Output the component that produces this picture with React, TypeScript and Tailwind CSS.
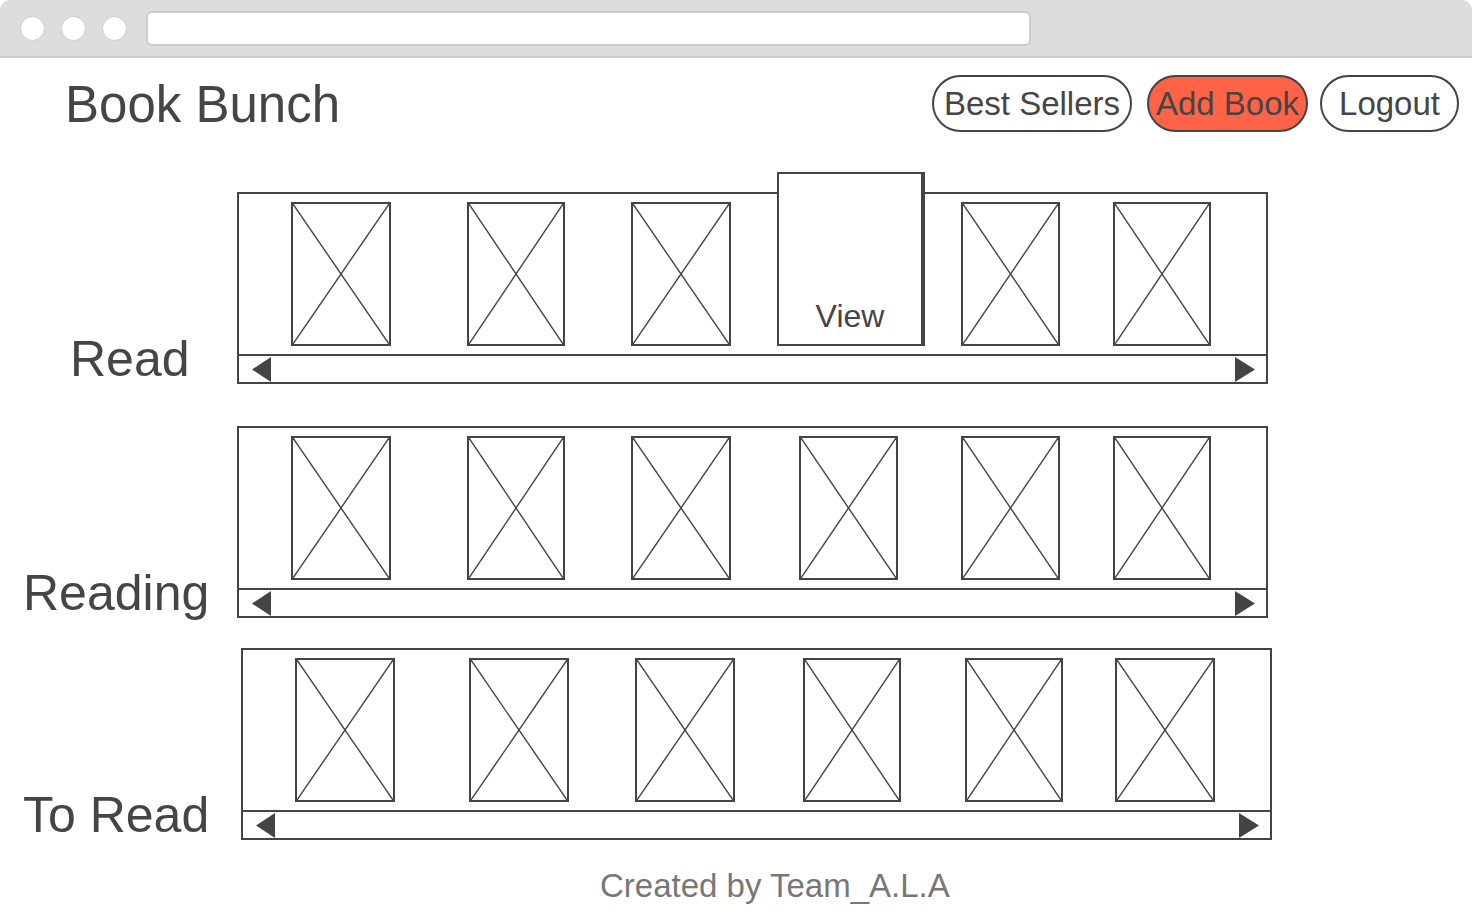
import type { ReactNode } from 'react';

type Item = { ml: string; w: string; view?: boolean };

const readRow: Item[] = [
  { ml: 'ml-[52px]', w: 'w-[100px]' },
  { ml: 'ml-[76px]', w: 'w-[98px]' },
  { ml: 'ml-[66px]', w: 'w-[100px]' },
  { ml: 'ml-[46px]', w: 'w-[148px]', view: true },
  { ml: 'ml-[36px]', w: 'w-[99px]' },
  { ml: 'ml-[53px]', w: 'w-[98px]' },
];

const readingRow: Item[] = [
  { ml: 'ml-[52px]', w: 'w-[100px]' },
  { ml: 'ml-[76px]', w: 'w-[98px]' },
  { ml: 'ml-[66px]', w: 'w-[100px]' },
  { ml: 'ml-[68px]', w: 'w-[99px]' },
  { ml: 'ml-[63px]', w: 'w-[99px]' },
  { ml: 'ml-[53px]', w: 'w-[98px]' },
];

const toReadRow: Item[] = [
  { ml: 'ml-[52px]', w: 'w-[100px]' },
  { ml: 'ml-[74px]', w: 'w-[100px]' },
  { ml: 'ml-[66px]', w: 'w-[100px]' },
  { ml: 'ml-[68px]', w: 'w-[98px]' },
  { ml: 'ml-[64px]', w: 'w-[98px]' },
  { ml: 'ml-[52px]', w: 'w-[100px]' },
];

export default function App() {
  return (
    <div className="min-h-screen w-[1472px] bg-white font-['Liberation_Sans',Arial,sans-serif] text-[#454545]">
      <BrowserChrome />

      <header className="mt-[17px] flex h-[57px] items-start justify-between pr-[13px]">
        <h1 className="mt-[4px] pl-[65px] text-[51px] leading-none">Book Bunch</h1>
        <div className="flex items-center">
          <PillButton className="w-[200px] bg-white">Best Sellers</PillButton>
          <PillButton className="ml-[15px] w-[161px] bg-[#ff6347]">Add Book</PillButton>
          <PillButton className="ml-[12px] w-[139px] bg-white">Logout</PillButton>
        </div>
      </header>

      <main className="mt-[60px] flex flex-col">
        <ShelfRow label="Read" labelClass="w-[237px] pl-[70px]" items={readRow} />
        <ShelfRow label="Reading" labelClass="w-[237px] pl-[23px]" items={readingRow} className="mt-[42px]" />
        <ShelfRow label="To Read" labelClass="w-[241px] pl-[23px]" items={toReadRow} className="mt-[30px]" />
      </main>

      <footer className="mt-[29px] pl-[600px] text-[33px] leading-none text-[#777777]">Created by Team_A.L.A</footer>
    </div>
  );
}

function BrowserChrome() {
  return (
    <div className="flex h-[58px] items-center rounded-t-[10px] border-b-2 border-[#cccccc] bg-[#dddddd] pl-[20px]">
      <div className="flex gap-[16px]">
        <span className="h-[25px] w-[25px] rounded-full border border-[#cccccc] bg-white" />
        <span className="h-[25px] w-[25px] rounded-full border border-[#cccccc] bg-white" />
        <span className="h-[25px] w-[25px] rounded-full border border-[#cccccc] bg-white" />
      </div>
      <div className="ml-[19px] h-[35px] w-[885px] rounded-[6px] border-2 border-[#cccccc] bg-white" />
    </div>
  );
}

function PillButton({ children, className }: { children: ReactNode; className: string }) {
  return (
    <button className={`flex h-[57px] items-center justify-center overflow-hidden whitespace-nowrap rounded-full border-2 border-[#444444] text-[33px] leading-none text-[#454545] ${className}`}>
      {children}
    </button>
  );
}

function ShelfRow({ label, labelClass, items, className = '' }: { label: string; labelClass: string; items: Item[]; className?: string }) {
  return (
    <section className={`flex items-end ${className}`}>
      <div className={`shrink-0 whitespace-nowrap text-[50px] leading-none ${labelClass}`}>{label}</div>
      <div className="w-[1031px] border-2 border-[#444444]">
        <div className="flex h-[160px] items-end pb-[8px]">
          {items.map((item, i) => (item.view ? <ViewCard key={i} item={item} /> : <Placeholder key={i} item={item} />))}
        </div>
        <div className="flex h-[28px] items-center justify-between border-t-2 border-[#444444] pl-[13px] pr-[11px]">
          <svg width="19" height="25" viewBox="0 0 19 25">
            <polygon points="0,12.5 19,0 19,25" fill="#444444" />
          </svg>
          <svg width="20" height="25" viewBox="0 0 20 25">
            <polygon points="0,0 20,12.5 0,25" fill="#444444" />
          </svg>
        </div>
      </div>
    </section>
  );
}

function Placeholder({ item }: { item: Item }) {
  return (
    <div className={`relative h-[144px] shrink-0 border-2 border-[#444444] ${item.ml} ${item.w}`}>
      <svg className="absolute inset-0 h-full w-full" viewBox="0 0 100 100" preserveAspectRatio="none">
        <line x1="0" y1="0" x2="100" y2="100" stroke="#444444" strokeWidth="1.4" vectorEffect="non-scaling-stroke" />
        <line x1="100" y1="0" x2="0" y2="100" stroke="#444444" strokeWidth="1.4" vectorEffect="non-scaling-stroke" />
      </svg>
    </div>
  );
}

function ViewCard({ item }: { item: Item }) {
  return (
    <div className={`relative z-10 flex h-[174px] shrink-0 items-end justify-center border-2 border-r-4 border-[#444444] bg-white pb-[12px] ${item.ml} ${item.w}`}>
      <span className="text-[32px] leading-none">View</span>
    </div>
  );
}
